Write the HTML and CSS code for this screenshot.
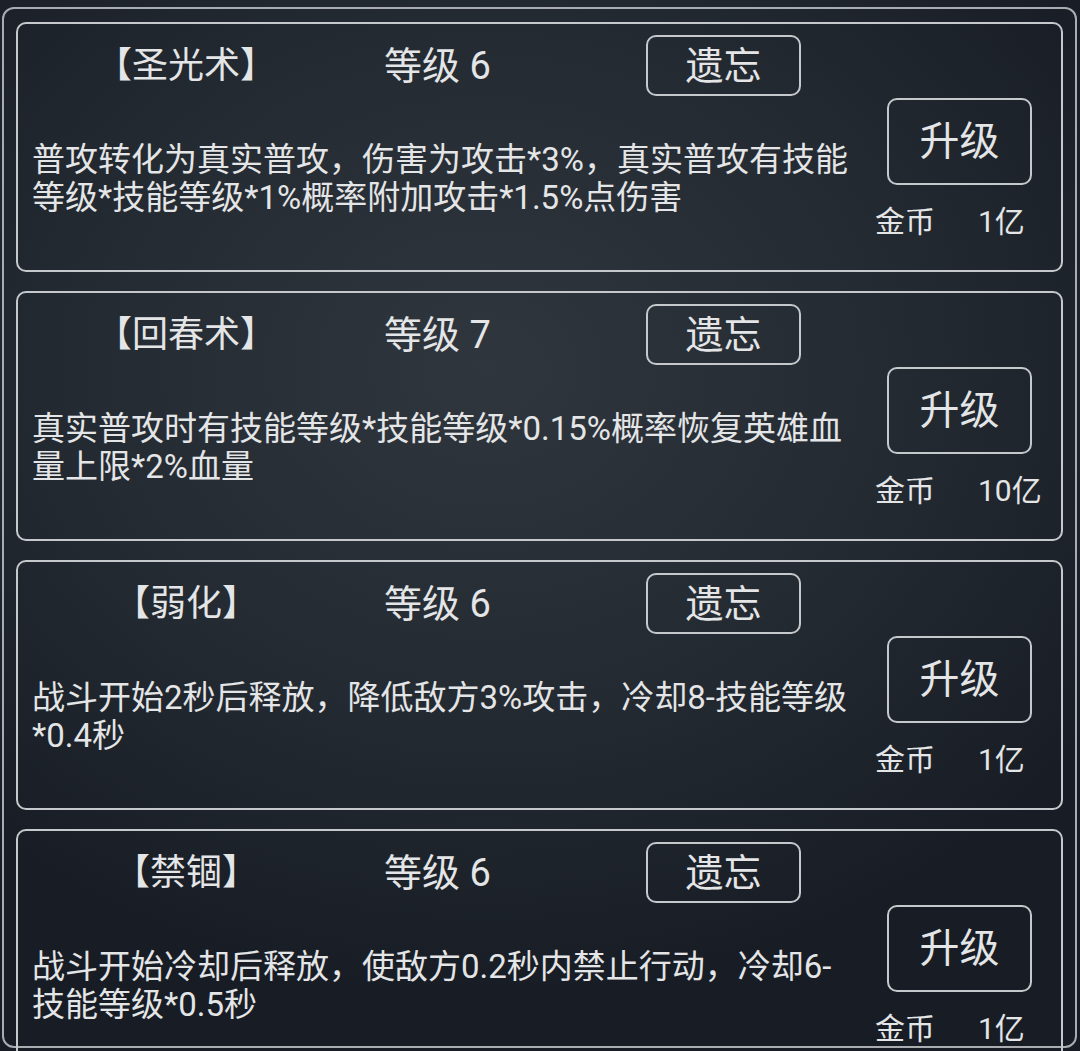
FILE: index.html
```html
<!DOCTYPE html>
<html lang="zh-CN">
<head>
    <meta charset="UTF-8">
    <meta name="viewport" content="width=device-width, initial-scale=1.0">
    <title>技能</title>
    <link rel="stylesheet" href="styles.css">
</head>
<body>
    <div class="panel">
        <div class="skill-card">
            <div class="skill-main">
                <div class="skill-head">
                    <div class="skill-name">【圣光术】</div>
                    <div class="skill-level">等级 6</div>
                    <button class="forget-btn">遗忘</button>
                </div>
                <div class="skill-desc">普攻转化为真实普攻，伤害为攻击*3%，真实普攻有技能等级*技能等级*1%概率附加攻击*1.5%点伤害</div>
            </div>
            <div class="skill-side">
                <button class="upgrade-btn">升级</button>
                <div class="cost"><span>金币</span><span>1亿</span></div>
            </div>
        </div>

        <div class="skill-card">
            <div class="skill-main">
                <div class="skill-head">
                    <div class="skill-name">【回春术】</div>
                    <div class="skill-level">等级 7</div>
                    <button class="forget-btn">遗忘</button>
                </div>
                <div class="skill-desc">真实普攻时有技能等级*技能等级*0.15%概率恢复英雄血量上限*2%血量</div>
            </div>
            <div class="skill-side">
                <button class="upgrade-btn">升级</button>
                <div class="cost"><span>金币</span><span>10亿</span></div>
            </div>
        </div>

        <div class="skill-card">
            <div class="skill-main">
                <div class="skill-head">
                    <div class="skill-name">【弱化】</div>
                    <div class="skill-level">等级 6</div>
                    <button class="forget-btn">遗忘</button>
                </div>
                <div class="skill-desc">战斗开始2秒后释放，降低敌方3%攻击，冷却8-技能等级*0.4秒</div>
            </div>
            <div class="skill-side">
                <button class="upgrade-btn">升级</button>
                <div class="cost"><span>金币</span><span>1亿</span></div>
            </div>
        </div>

        <div class="skill-card">
            <div class="skill-main">
                <div class="skill-head">
                    <div class="skill-name">【禁锢】</div>
                    <div class="skill-level">等级 6</div>
                    <button class="forget-btn">遗忘</button>
                </div>
                <div class="skill-desc">战斗开始冷却后释放，使敌方0.2秒内禁止行动，冷却6-技能等级*0.5秒</div>
            </div>
            <div class="skill-side">
                <button class="upgrade-btn">升级</button>
                <div class="cost"><span>金币</span><span>1亿</span></div>
            </div>
        </div>
    </div>
</body>
</html>
```

FILE: styles.css
```css
* {
    margin: 0;
    padding: 0;
    box-sizing: border-box;
}

html, body {
    height: 1051px;
    overflow: hidden;
}

body {
    font-family: Roboto, "Noto Sans CJK SC", sans-serif;
    color: #e4e5e6;
    background: radial-gradient(ellipse 70% 60% at 45% 35%, #30363d 0%, #242a31 55%, #181d25 100%);
    background-color: #1a1f27;
}

.panel {
    margin: 7px 3px 0 2px;
    height: 1041px;
    border: 2px solid #a9adb2;
    border-radius: 12px;
    padding: 13px 12px 0 12px;
    display: flex;
    flex-direction: column;
    gap: 19px;
}

.skill-card {
    flex: none;
    height: 250px;
    border: 2px solid #c6c9cc;
    border-radius: 10px;
    padding: 11px 29px 0 14px;
    display: grid;
    grid-template-columns: 1fr 145px;
}

.skill-head {
    display: flex;
    align-items: center;
    height: 61px;
}

.skill-name {
    width: 308px;
    text-align: center;
    font-size: 36px;
    line-height: 1;
}

.skill-level {
    width: 306px;
    padding-left: 44px;
    font-size: 38px;
    line-height: 1;
}

button {
    font-family: inherit;
    color: #e4e5e6;
    background: transparent;
    border: 2px solid #c6c9cc;
    border-radius: 10px;
    cursor: pointer;
}

.forget-btn {
    width: 155px;
    height: 61px;
    font-size: 38px;
    line-height: 1;
}

.skill-desc {
    margin-top: 45px;
    padding-right: 31px;
    font-size: 33px;
    line-height: 38px;
}

.skill-side {
    padding-top: 63px;
}

.upgrade-btn {
    width: 145px;
    height: 87px;
    font-size: 40px;
    line-height: 1;
}

.cost {
    display: flex;
    gap: 43px;
    margin-top: 19px;
    margin-left: -12px;
    font-size: 30px;
    line-height: 36px;
    white-space: nowrap;
}
```
